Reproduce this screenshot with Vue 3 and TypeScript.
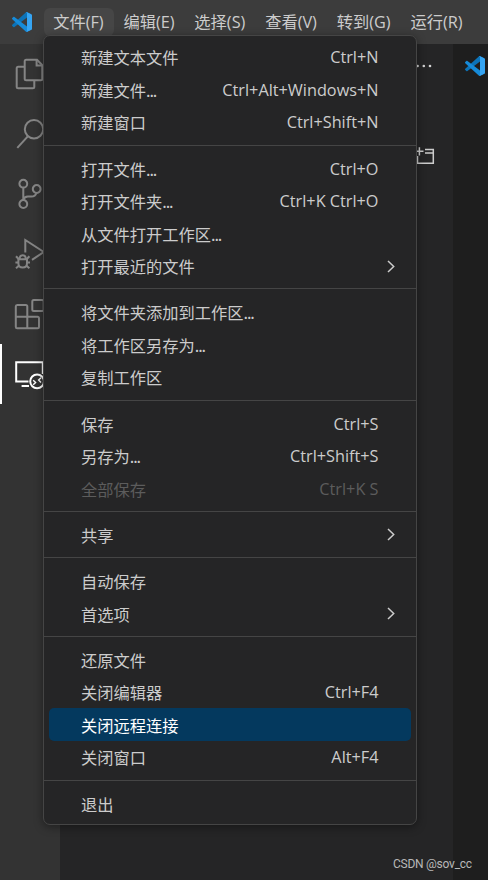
<script setup lang="ts">
interface MenuItem {
  label: string
  more?: boolean
  keys?: string
  submenu?: boolean
  disabled?: boolean
  active?: boolean
}

const menus: string[] = ['文件(F)', '编辑(E)', '选择(S)', '查看(V)', '转到(G)', '运行(R)']

const groups: MenuItem[][] = [
  [
    { label: '新建文本文件', keys: 'Ctrl+N' },
    { label: '新建文件', more: true, keys: 'Ctrl+Alt+Windows+N' },
    { label: '新建窗口', keys: 'Ctrl+Shift+N' },
  ],
  [
    { label: '打开文件', more: true, keys: 'Ctrl+O' },
    { label: '打开文件夹', more: true, keys: 'Ctrl+K Ctrl+O' },
    { label: '从文件打开工作区', more: true },
    { label: '打开最近的文件', submenu: true },
  ],
  [
    { label: '将文件夹添加到工作区', more: true },
    { label: '将工作区另存为', more: true },
    { label: '复制工作区' },
  ],
  [
    { label: '保存', keys: 'Ctrl+S' },
    { label: '另存为', more: true, keys: 'Ctrl+Shift+S' },
    { label: '全部保存', keys: 'Ctrl+K S', disabled: true },
  ],
  [{ label: '共享', submenu: true }],
  [{ label: '自动保存' }, { label: '首选项', submenu: true }],
  [
    { label: '还原文件' },
    { label: '关闭编辑器', keys: 'Ctrl+F4' },
    { label: '关闭远程连接', active: true },
    { label: '关闭窗口', keys: 'Alt+F4' },
  ],
  [{ label: '退出' }],
]

const activities: { name: string; paths: string[]; active?: boolean }[] = [
  {
    name: 'explorer',
    paths: [
      'M9.7 7.7H3.2Q1.7 7.7 1.7 9.2V27.8Q1.7 29.3 3.2 29.3H17.8Q19.3 29.3 19.3 27.8V21.3',
      'M11.2 .8H22L27.3 6.1V19.8Q27.3 21.3 25.8 21.3H11.2Q9.7 21.3 9.7 19.8V2.3Q9.7 .8 11.2 .8Z',
      'M21.6 1V6.4H27',
    ],
  },
  { name: 'search', paths: ['M9.8 10.3a9.2 9.2 0 1 0 18.4 0a9.2 9.2 0 1 0-18.4 0', 'M12.8 17.3L2.3 28.8'] },
  {
    name: 'source control',
    paths: [
      'M4.4 4.7a3.9 3.9 0 1 0 7.8 0a3.9 3.9 0 1 0-7.8 0',
      'M17.8 10a3.9 3.9 0 1 0 7.8 0a3.9 3.9 0 1 0-7.8 0',
      'M4.4 25a3.9 3.9 0 1 0 7.8 0a3.9 3.9 0 1 0-7.8 0',
      'M8.3 8.7V21M21.5 14Q20.3 17.5 16.5 17.5H12.8Q9.5 17.5 8.3 21',
    ],
  },
  {
    name: 'run',
    paths: [
      'M10.3 13.5V1L28.8 13L17 20.8',
      'M3.4 20.2H12V24.2Q12 28.5 7.7 28.5T3.4 24.2ZM4.6 20Q4.6 16.2 7.7 16.2T10.8 20',
      'M.4 23.6H3.4M12 23.6H15M1 17.2L3.6 20M14.4 17.2L11.8 20M1 29.2L4.2 26.5M14.4 29.2L11.2 26.5',
    ],
  },
  {
    name: 'extensions',
    paths: [
      'M2.2 6H10.8Q12.3 6 12.3 7.5V17.8H22.5Q24 17.8 24 19.3V27.8Q24 29.3 22.5 29.3H2.2Q.8 29.3 .8 27.8V7.5Q.8 6 2.2 6Z',
      'M.8 17.8H12.3V29.3',
      'M18.8 1H27.2Q28.7 1 28.7 2.5V10.5Q28.7 12 27.2 12H18.8Q17.3 12 17.3 10.5V2.5Q17.3 1 18.8 1Z',
    ],
  },
  {
    name: 'remote',
    active: true,
    paths: [
      'M13.5 22.6H1.2V3.3H27.8V15M6.6 27H14',
      'M15.2 22.3a6.9 6.9 0 1 0 13.8 0a6.9 6.9 0 1 0-13.8 0',
      'M18.2 21.2L20.6 23.5L18.2 25.8M26 18.8L23.6 21.1L26 23.4',
    ],
  },
]

const logo = [
  {
    fill: '#0c73b8',
    d: 'M96.46 10.8L75.86.88C73.47-.27 70.62.21 68.75 2.08L1.3 63.58C-.52 65.24-.52 68.1 1.3 69.75L6.82 74.76c1.49 1.35 3.72 1.45 5.32.24L93.36 13.37c2.72-2.07 6.64-.12 6.64 3.3v-.24c0-2.4-1.38-4.6-3.54-5.63z',
  },
  {
    fill: '#168bd9',
    d: 'M96.46 89.2l-20.6 9.92c-2.39 1.15-5.24.66-7.11-1.21L1.3 36.41c-1.82-1.65-1.82-4.51 0-6.17l5.51-5.01c1.49-1.35 3.73-1.45 5.33-.24l81.23 61.62c2.72 2.07 6.63.12 6.63-3.3v.24c0 2.4-1.38 4.6-3.54 5.64z',
  },
  {
    fill: '#36a5f3',
    d: 'M75.86 99.13c-2.39 1.15-5.24.66-7.11-1.21c2.31 2.31 6.25.67 6.25-2.59V4.67c0-3.26-3.94-4.89-6.25-2.58c1.87-1.87 4.72-2.36 7.11-1.21l20.6 9.91c2.16 1.04 3.54 3.23 3.54 5.63v67.17c0 2.4-1.38 4.59-3.54 5.63z',
  },
]
</script>

<template>
  <div class="window">
    <header class="titlebar">
      <svg class="logo" viewBox="0 0 100 100">
        <path v-for="p in logo" :key="p.fill" :d="p.d" :fill="p.fill" />
      </svg>
      <nav class="menubar">
        <span v-for="(m, i) in menus" :key="m" class="menu-title" :class="{ open: i === 0 }">{{ m }}</span>
      </nav>
    </header>

    <div class="workbench">
      <aside class="activitybar">
        <div v-for="a in activities" :key="a.name" class="activity" :class="{ current: a.active }">
          <svg class="activity-icon" viewBox="0 0 30 30">
            <path v-for="d in a.paths" :key="d" :d="d" />
          </svg>
        </div>
      </aside>
      <section class="sidebar">
        <svg class="more" viewBox="0 0 18 4">
          <circle cx="2.6" cy="2" r="1.3" />
          <circle cx="8.8" cy="2" r="1.3" />
          <circle cx="15" cy="2" r="1.3" />
        </svg>
        <svg class="new-window" viewBox="0 0 20 18">
          <path d="M2.5 9V16.2H18.3V2.5H10M10 6H18.3M.5 4.2H8.5M4.4 .2V8.5" />
        </svg>
      </section>
      <main class="editor">
        <svg class="logo" viewBox="0 0 100 100">
          <path v-for="p in logo" :key="p.fill" :d="p.d" :fill="p.fill" />
        </svg>
      </main>
    </div>

    <div class="dropdown">
      <div v-for="(group, g) in groups" :key="g" class="group">
        <div
          v-for="item in group"
          :key="item.label"
          class="item"
          :class="{ disabled: item.disabled, active: item.active }"
        >
          <span class="label">{{ item.label }}<span v-if="item.more" class="ellipsis">...</span></span>
          <span v-if="item.keys" class="keys">{{ item.keys }}</span>
          <svg v-if="item.submenu" class="chevron" viewBox="0 0 8 13">
            <path d="M1 1L6.7 6.5L1 12" />
          </svg>
        </div>
      </div>
    </div>

    <span class="watermark">CSDN @sov_cc</span>
  </div>
</template>

<style>
body {
  margin: 0;
  background: #1e1e1e;
}
</style>

<style scoped>
.window {
  position: relative;
  display: flex;
  flex-direction: column;
  width: 488px;
  height: 880px;
  overflow: hidden;
  background: #1e1e1e;
  color: #cccccc;
  font-family: 'Open Sans', 'Noto Sans CJK SC', sans-serif;
  font-size: 16.25px;
}

.titlebar {
  display: flex;
  align-items: center;
  height: 44px;
  flex: none;
  box-sizing: border-box;
  padding-left: 12px;
  background: #3c3c3c;
}

.logo {
  display: block;
  width: 20px;
  height: 20px;
  flex: none;
}

.menubar {
  display: flex;
  margin-left: 12px;
}

.menu-title {
  height: 28px;
  line-height: 28px;
  padding: 0 10.6px 0 9.2px;
  border-radius: 6px;
  white-space: nowrap;
}

.menu-title.open {
  background: #464646;
}

.workbench {
  display: flex;
  flex: 1;
}

.activitybar {
  width: 60px;
  background: #333333;
}

.activity {
  display: flex;
  align-items: center;
  height: 60px;
  box-sizing: border-box;
  padding-left: 15px;
  color: #858585;
}

.activity.current {
  border-left: 2px solid #ffffff;
  padding-left: 13px;
  color: #ffffff;
}

.activity-icon {
  width: 30px;
  height: 30px;
  fill: none;
  stroke: currentColor;
  stroke-width: 2;
  overflow: visible;
}

.activity.current path:last-child {
  stroke-width: 1.4;
}

.sidebar {
  display: flex;
  flex-direction: column;
  align-items: flex-end;
  width: 393px;
  box-sizing: border-box;
  padding: 20px 18px 0 0;
  background: #252526;
}

.more {
  width: 18px;
  height: 4px;
  margin-right: 2px;
  fill: #d4d4d4;
}

.new-window {
  width: 20px;
  height: 18px;
  margin-top: 79px;
  fill: none;
  stroke: #cccccc;
  stroke-width: 1.5;
}

.editor {
  flex: 1;
  padding: 12px 0 0 12px;
}

.dropdown {
  position: absolute;
  left: 43px;
  top: 35px;
  width: 374px;
  height: 790px;
  box-sizing: border-box;
  padding-top: 5px;
  border: 1px solid #454545;
  border-radius: 7px;
  background: #252526;
  box-shadow: 0 2px 10px rgba(0, 0, 0, 0.4);
}

.group + .group::before {
  content: '';
  display: block;
  height: 1px;
  margin: 6.2px 0 6.55px;
  background: #454545;
}

.item {
  display: flex;
  align-items: center;
  height: 32.5px;
  box-sizing: border-box;
  margin: 0 5px;
  padding: 0.3px 16px 0 32px;
  border-radius: 5px;
  line-height: 32px;
  white-space: nowrap;
}

.label {
  flex: 1;
  font-family: 'Noto Sans CJK SC', sans-serif;
}

.ellipsis {
  letter-spacing: -1.1px;
}

.keys {
  margin-right: 16.5px;
}

.chevron {
  width: 8px;
  height: 13px;
  fill: none;
  stroke: #cccccc;
  stroke-width: 1.5;
}

.item.disabled {
  color: #5c5c5c;
}

.item.active {
  background: #04395e;
  color: #ffffff;
}

.watermark {
  position: absolute;
  left: 393px;
  top: 857px;
  color: #b8b8b8;
  font-family: Roboto, sans-serif;
  font-size: 12px;
  letter-spacing: -0.25px;
  line-height: 14px;
  white-space: nowrap;
}
</style>
